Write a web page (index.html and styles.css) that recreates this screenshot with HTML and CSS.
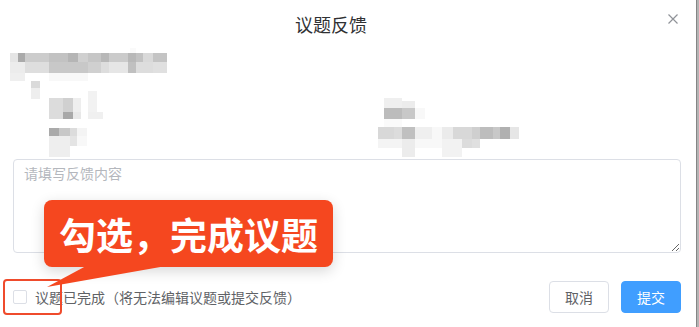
FILE: index.html
```html
<!DOCTYPE html>
<html lang="zh-CN">
<head>
<meta charset="utf-8">
<title>议题反馈</title>
<link rel="stylesheet" href="styles.css">
</head>
<body>
<div class="dialog">
  <header class="dlg-header">
    <h2 class="dlg-title">议题反馈</h2>
    <button class="dlg-close" type="button" aria-label="关闭">
      <svg width="10" height="10" viewBox="0 0 10 10"><path d="M0.5 0.5 L9.5 9.5 M9.5 0.5 L0.5 9.5" stroke="#909399" stroke-width="1.2" fill="none"/></svg>
    </button>
  </header>
  <div class="dlg-body">
    <svg class="mosaic" viewBox="0 48 530 111" width="530" height="111" aria-hidden="true">
      <rect x="10" y="53" width="8" height="9" fill="#e5e5e5"/>
      <rect x="18" y="53" width="7" height="9" fill="#aaaaaa"/>
      <rect x="25" y="53" width="24" height="9" fill="#cccccc"/>
      <rect x="49" y="53" width="19" height="9" fill="#c2c2c2"/>
      <rect x="68" y="53" width="10" height="9" fill="#b5b5b5"/>
      <rect x="78" y="53" width="10" height="9" fill="#d0d0d0"/>
      <rect x="88" y="53" width="13" height="9" fill="#c6c6c6"/>
      <rect x="101" y="53" width="8" height="9" fill="#b8b8b8"/>
      <rect x="109" y="53" width="19" height="9" fill="#cbcbcb"/>
      <rect x="128" y="53" width="8" height="9" fill="#b8b8b8"/>
      <rect x="136" y="53" width="7" height="9" fill="#c2c2c2"/>
      <rect x="143" y="53" width="10" height="9" fill="#d9d9d9"/>
      <rect x="153" y="53" width="14" height="9" fill="#c4c4c4"/>
      <rect x="130" y="44" width="6" height="9" fill="#fafafa"/>
      <rect x="10" y="62" width="15" height="11" fill="#ececec"/>
      <rect x="25" y="62" width="24" height="11" fill="#dedede"/>
      <rect x="49" y="62" width="39" height="11" fill="#c8c8c8"/>
      <rect x="88" y="62" width="13" height="11" fill="#d0d0d0"/>
      <rect x="101" y="62" width="8" height="11" fill="#dddddd"/>
      <rect x="109" y="62" width="19" height="11" fill="#e6e6e6"/>
      <rect x="128" y="62" width="8" height="11" fill="#c0c0c0"/>
      <rect x="136" y="62" width="17" height="11" fill="#dddddd"/>
      <rect x="153" y="62" width="14" height="11" fill="#e0e0e0"/>
      <rect x="10" y="73" width="15" height="8" fill="#efefef"/>
      <rect x="49" y="73" width="39" height="8" fill="#f8f8f8"/>
      <rect x="31" y="81" width="9" height="7" fill="#dadada"/>
      <rect x="31" y="88" width="9" height="11" fill="#eeeeee"/>
      <rect x="88" y="91" width="9" height="21" fill="#f2f2f2"/>
      <rect x="49" y="98" width="14" height="14" fill="#dcdcdc"/>
      <rect x="63" y="98" width="10" height="14" fill="#d0d0d0"/>
      <rect x="73" y="98" width="8" height="14" fill="#eeeeee"/>
      <rect x="49" y="112" width="14" height="7" fill="#dcdcdc"/>
      <rect x="63" y="112" width="10" height="7" fill="#a8a8a8"/>
      <rect x="73" y="112" width="8" height="7" fill="#e8e8e8"/>
      <rect x="88" y="112" width="15" height="7" fill="#f0f0f0"/>
      <rect x="49" y="128" width="10" height="8" fill="#aaaaaa"/>
      <rect x="59" y="128" width="11" height="8" fill="#c8c8c8"/>
      <rect x="70" y="128" width="7" height="8" fill="#dcdcdc"/>
      <rect x="77" y="128" width="10" height="8" fill="#f4f4f4"/>
      <rect x="49" y="136" width="21" height="21" fill="#eeeeee"/>
      <rect x="70" y="136" width="7" height="10" fill="#e4e4e4"/>
      <rect x="77" y="136" width="10" height="10" fill="#f8f8f8"/>
      <rect x="384" y="98" width="18" height="10" fill="#efefef"/>
      <rect x="402" y="101" width="13" height="7" fill="#ececec"/>
      <rect x="384" y="108" width="18" height="11" fill="#bcbcbc"/>
      <rect x="402" y="108" width="13" height="11" fill="#c8c8c8"/>
      <rect x="415" y="108" width="10" height="11" fill="#f8f8f8"/>
      <rect x="384" y="119" width="18" height="8" fill="#fafafa"/>
      <rect x="378" y="127" width="16" height="12" fill="#d8d8d8"/>
      <rect x="394" y="127" width="8" height="12" fill="#dcdcdc"/>
      <rect x="402" y="127" width="13" height="12" fill="#c0c0c0"/>
      <rect x="415" y="127" width="17" height="12" fill="#efefef"/>
      <rect x="432" y="127" width="10" height="12" fill="#f8f8f8"/>
      <rect x="442" y="127" width="11" height="12" fill="#ebebeb"/>
      <rect x="453" y="127" width="19" height="12" fill="#d8d8d8"/>
      <rect x="472" y="127" width="8" height="12" fill="#cfcfcf"/>
      <rect x="480" y="127" width="13" height="12" fill="#bdbdbd"/>
      <rect x="493" y="127" width="7" height="12" fill="#c8c8c8"/>
      <rect x="500" y="127" width="10" height="12" fill="#b0b0b0"/>
      <rect x="510" y="127" width="9" height="12" fill="#e6e6e6"/>
      <rect x="378" y="139" width="24" height="9" fill="#f4f4f4"/>
      <rect x="402" y="139" width="13" height="18" fill="#ececec"/>
      <rect x="415" y="139" width="27" height="9" fill="#f8f8f8"/>
      <rect x="442" y="139" width="20" height="18" fill="#f2f2f2"/>
      <rect x="462" y="139" width="10" height="9" fill="#dcdcdc"/>
      <rect x="472" y="139" width="8" height="9" fill="#e0e0e0"/>
    </svg>
    <textarea class="feedback" placeholder="请填写反馈内容"></textarea>
  </div>
  <footer class="dlg-footer">
    <label class="done">
      <span class="checkbox"></span>
      <span class="done-text">议题已完成（将无法编辑议题或提交反馈）</span>
    </label>
    <div class="actions">
      <button class="btn" type="button">取消</button>
      <button class="btn btn-primary" type="button">提交</button>
    </div>
  </footer>
  <div class="highlight"></div>
  <div class="callout">勾选，完成议题</div>
  <svg class="callout-tail" width="140" height="30" viewBox="0 0 140 30" aria-hidden="true">
    <polygon points="46,4 126,4 7,25" fill="#f5471f"/>
  </svg>
</div>
</body>
</html>
```
FILE: styles.css
```css
html, body {
  margin: 0;
  padding: 0;
}
body {
  width: 699px;
  height: 327px;
  overflow: hidden;
  background: #b4b4b4;
  font-family: "Noto Sans CJK SC", "Noto Sans", sans-serif;
}
.dialog {
  position: relative;
  width: 697px;
  height: 327px;
  box-sizing: border-box;
  background: #ffffff;
  border-right: 1px solid #858585;
}
.dlg-header {
  display: flex;
  align-items: flex-start;
  height: 48px;
  box-sizing: border-box;
  padding-top: 12px;
}
.dlg-title {
  flex: 1;
  margin: 0;
  text-align: center;
  font-size: 18px;
  line-height: 24px;
  font-weight: 400;
  color: #303133;
}
.dlg-close {
  display: flex;
  width: 10px;
  height: 10px;
  margin: 2px 18px 0 6px;
  padding: 0;
  border: 0;
  background: none;
}
.mosaic {
  display: block;
}
.feedback {
  display: block;
  margin-left: 13px;
  width: 668px;
  height: 94px;
  box-sizing: border-box;
  padding: 3px 10px;
  border: 1px solid #dcdfe6;
  border-radius: 4px;
  font-family: "Noto Sans CJK SC", "Noto Sans", sans-serif;
  font-size: 14px;
  line-height: 21px;
  color: #606266;
  resize: vertical;
  outline: none;
}
.feedback::placeholder {
  color: #b4b7bd;
}
.dlg-footer {
  display: flex;
  align-items: center;
  justify-content: space-between;
  height: 32px;
  margin-top: 28px;
  padding: 0 15px 0 13px;
}
.done {
  display: flex;
  align-items: center;
  gap: 8px;
  font-size: 14px;
  line-height: 20px;
  color: #606266;
}
.checkbox {
  width: 14px;
  height: 14px;
  box-sizing: border-box;
  border: 1px solid #dcdfe6;
  border-radius: 2px;
  background: #fff;
}
.actions {
  display: flex;
  gap: 12px;
}
.btn {
  width: 60px;
  height: 32px;
  padding: 0;
  border: 1px solid #dcdfe6;
  border-radius: 4px;
  background: #ffffff;
  color: #606266;
  font-family: "Noto Sans CJK SC", "Noto Sans", sans-serif;
  font-size: 14px;
}
.btn-primary {
  background: #409eff;
  border-color: #409eff;
  color: #ffffff;
}
.highlight {
  position: absolute;
  left: 3px;
  top: 279px;
  width: 59px;
  height: 36px;
  box-sizing: border-box;
  border: 2px solid #ef4b2c;
  border-radius: 4px;
}
.callout {
  position: absolute;
  left: 44px;
  top: 200px;
  width: 289px;
  height: 67px;
  border-radius: 8px;
  background: #f5471f;
  color: #ffffff;
  font-size: 37px;
  font-weight: 700;
  display: flex;
  align-items: center;
  justify-content: center;
  box-shadow: 0 4px 14px rgba(0, 0, 0, 0.16);
}
.callout-tail {
  position: absolute;
  left: 40px;
  top: 262px;
}
```
